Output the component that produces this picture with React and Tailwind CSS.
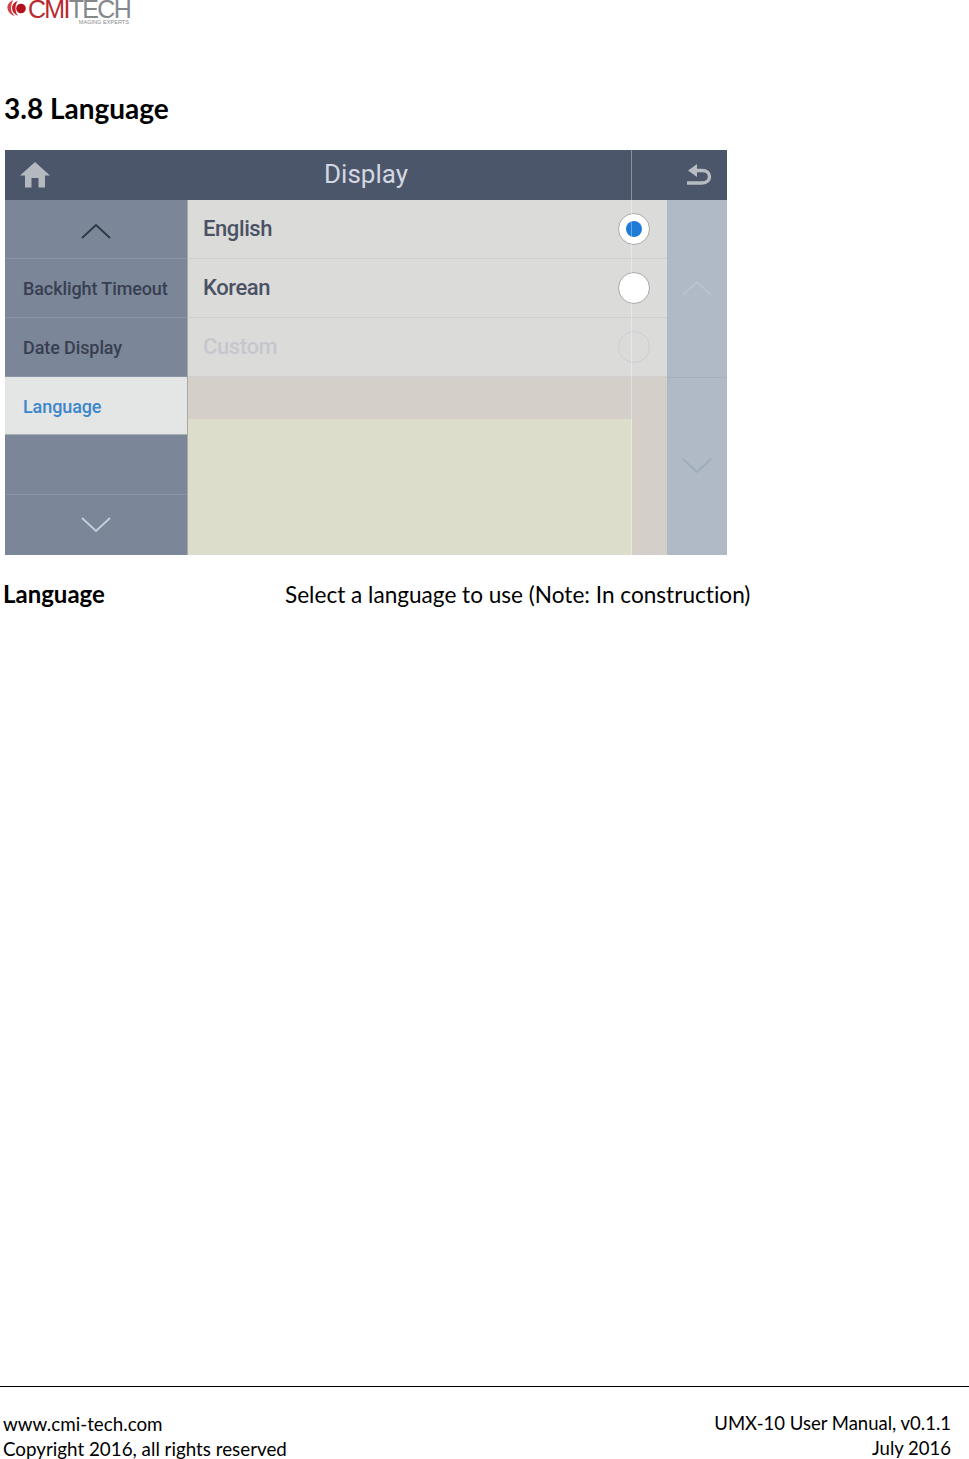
const doc = { fontFamily: '"Lato", "Open Sans", sans-serif', fontVariantLigatures: "none" };
const ui = { fontFamily: 'Roboto, sans-serif' };

function Chevron({ up, color, className }) {
  return (
    <svg width="30" height="16" viewBox="0 0 30 16" className={className} fill="none" stroke={color} strokeWidth="1.8">
      <path d={up ? "M1 15L15 2L29 15" : "M1 1L15 14L29 1"} />
    </svg>
  );
}

function Logo() {
  return (
    <div className="h-[26px] overflow-hidden flex items-start pl-[7px]">
      <svg width="20" height="18" viewBox="0 0 20 18" className="shrink-0">
        <path d="M6 0C2 2 0 5 .5 8.500C1 12 4 15 8 16C5 13 4 11 4 8C4 5 5 3 6 0Z" fill="#d0434a" />
        <path d="M11 1C7 2 5 5 5 8C5 11 7 14 11 16C9 13 8.500 11 8.500 8C8.500 5 9 3 11 1Z" fill="#bf2029" />
        <circle cx="14" cy="8.500" r="4.800" fill="#b40f1a" />
      </svg>
      <div className="relative h-[26px] shrink-0 ml-[1px]" style={{ fontFamily: '"Liberation Sans", sans-serif' }}>
        <div className="flex h-[19px] text-[25px] leading-[19px] tracking-[-1.7px]">
          <span className="text-[#b92a30]">CMI</span>
          <span className="text-[#85888b]">TECH</span>
        </div>
        <div className="absolute right-[1px] top-[19px] text-[5.6px] leading-[6px] text-[#8a8a8a] whitespace-nowrap">MAGING EXPERTS</div>
      </div>
    </div>
  );
}

function SideRow({ children, active }) {
  return (
    <div className={`flex items-center pl-[18px] text-[18px] font-medium tracking-[-0.1px] ${active ? "h-[58px] pt-[2px] bg-[#e4e5e5] text-[#3c87cb] border-b border-[#a9adb4]" : "h-[59px] text-[#373f50] border-b border-[#8a94a7]"}`}>
      {children}
    </div>
  );
}

function OptionRow({ label, dim, children }) {
  return (
    <div className={`h-[59px] flex items-center justify-between pl-[15px] pr-[17px] text-[22px] font-medium tracking-[-0.4px] border-b border-[#cfcfcf] bg-[#dbdbda] ${dim ? "text-[#c5c7cc]" : "text-[#4a5264]"}`}>
      <span className="mt-[-1px]">{label}</span>
      {children}
    </div>
  );
}

export default function App() {
  return (
    <div className="relative w-[969px] h-[1459px] bg-white overflow-hidden flex flex-col text-black" style={doc}>
      <Logo />
      <h1 className="mt-[64px] ml-[4px] text-[28px] leading-[36px] font-bold">3.8 Language</h1>

      <div className="relative mt-[24px] ml-[5px] w-[722px] h-[405px] flex flex-col" style={ui}>
        <div className="h-[50px] shrink-0 bg-[#4c566a] flex items-center justify-between pl-[15px] pr-[15px] relative">
          <svg width="30" height="26" viewBox="0 0 30 26" fill="#b4b8bf">
            <path fillRule="evenodd" d="M15 0L0 13.500H5V25.500H25V13.500H30ZM11.500 25.500V16H18.500V25.500Z" />
          </svg>
          <span className="text-[26px] text-[#d2d7e1] absolute left-[319px] top-[6px] leading-[36px]">Display</span>
          <svg width="28" height="26" viewBox="0 0 28 26" fill="none" stroke="#b7bbc2" strokeWidth="3.400">
            <path d="M3 21H18C23 21 25.500 18 25.500 14.500C25.500 11 23 8.500 18 8.500H9" />
            <path d="M4 8.500L13 2V15Z" fill="#b7bbc2" stroke="none" />
          </svg>
        </div>

        <div className="h-[355px] flex">
          <div className="w-[182px] bg-[#7c8699] flex flex-col">
            <div className="h-[59px] flex items-center justify-center border-b border-[#8a94a7]">
              <Chevron up color="#2f3644" className="mt-[4px]" />
            </div>
            <SideRow>Backlight Timeout</SideRow>
            <SideRow>Date Display</SideRow>
            <SideRow active>Language</SideRow>
            <div className="h-[60px] border-b border-[#8a94a7]" />
            <div className="h-[60px] flex items-center justify-center">
              <Chevron color="#c9ced8" />
            </div>
          </div>

          <div className="flex-1 flex flex-col border-l border-[#a8a8a4]">
            <OptionRow label="English">
              <div className="w-[32px] h-[32px] rounded-full bg-white border-[1.5px] border-[#a9a9a9] flex items-center justify-center">
                <div className="w-[16px] h-[16px] rounded-full bg-[#1f7bd8]" />
              </div>
            </OptionRow>
            <OptionRow label="Korean">
              <div className="w-[32px] h-[32px] rounded-full bg-white border-[1.5px] border-[#a9a9a9]" />
            </OptionRow>
            <OptionRow label="Custom" dim>
              <div className="w-[32px] h-[32px] rounded-full border-[1.5px] border-[#cdcfd3]" />
            </OptionRow>
            <div className="h-[42px] bg-[#d4cfc8]" />
            <div className="flex-1 flex">
              <div className="flex-1 bg-[#dcddcb]" />
              <div className="w-[35px] bg-[#d4cfc8]" />
            </div>
          </div>

          <div className="w-[60px] bg-[#b0bac7] flex flex-col">
            <div className="h-[178px] border-b border-[#a5afbd] flex items-center justify-center">
              <Chevron up color="#bac2ce" className="mt-[-1px]" />
            </div>
            <div className="flex-1 flex items-start justify-center pt-[80px]">
              <Chevron color="#a0abba" />
            </div>
          </div>
        </div>

        <div className="absolute left-[626px] top-0 bottom-0 w-px bg-white/35" />
      </div>

      <div className="mt-[23px] ml-[3px] flex items-baseline leading-[32px]">
        <span className="w-[282px] text-[24px] font-bold">Language</span>
        <span className="text-[22.6px]">Select a language to use (Note: In construction)</span>
      </div>

      <div className="mt-auto border-t border-black pt-[24px] pl-[3px] pr-[18px] h-[73px] flex justify-between leading-[25px]">
        <div className="text-[18.8px]">
          <div>www.cmi-tech.com</div>
          <div>Copyright 2016, all rights reserved</div>
        </div>
        <div className="text-right text-[18.5px]">
          <div>UMX-10 User Manual, v0.1.1</div>
          <div>July 2016</div>
        </div>
      </div>
    </div>
  );
}
